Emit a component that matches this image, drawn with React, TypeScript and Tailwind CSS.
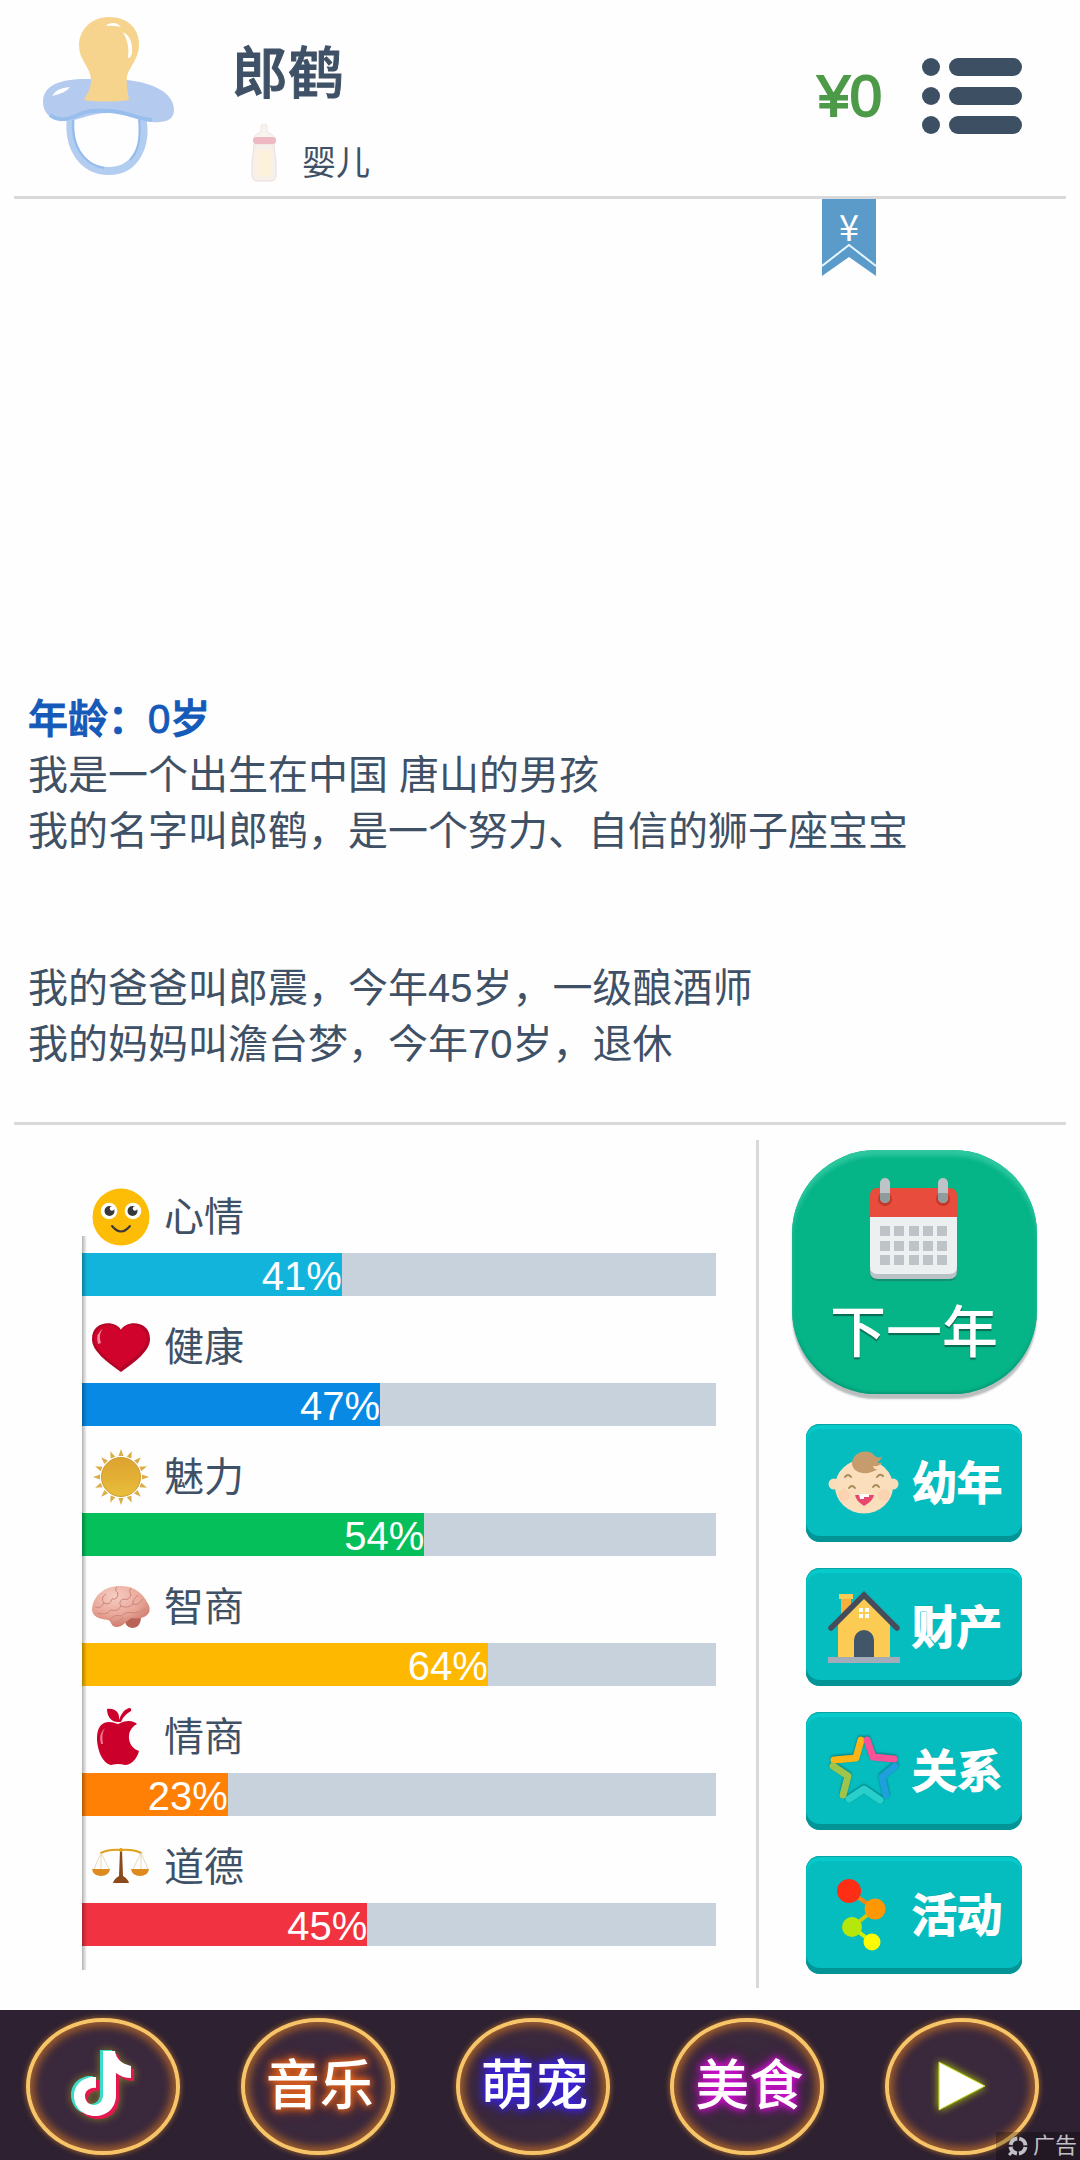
import type { ReactNode } from 'react';

interface Stat {
  label: string;
  value: number;
  color: string;
  icon: ReactNode;
}

interface MenuItem {
  label: string;
  icon: ReactNode;
}

interface AdItem {
  label: string;
  glow?: string;
  icon?: ReactNode;
}

const PacifierIcon = () => (
  <svg viewBox="42 16 132 160" className="h-[160px] w-[132px] shrink-0">
    <path d="M71 116C67 148 83 171 109 171C135 171 148 146 142 116" fill="none" stroke="#b3cdf1" strokeWidth="8" />
    <path d="M73 118C71 144 82 164 104 168M139 118C141 140 138 152 130 160" fill="none" stroke="#93bbec" strokeWidth="2" />
    <path
      d="M43 102C43 84 62 78 92 79L128 80C152 83 174 92 174 110C174 120 165 123 152 122C138 120 128 112 108 113C90 113 76 122 64 121C52 120 43 114 43 102Z"
      fill="#b4cbef"
    />
    <path d="M50 115C58 121 66 120 78 115C90 109 98 111 108 111C126 111 136 119 152 120" fill="none" stroke="#98beee" strokeWidth="4" />
    <path
      d="M109 17C92 17 79 29 79 46C79 60 91 68 91 80C91 90 86 95 84 100C96 102 116 102 129 100C128 94 126 84 127 77C129 66 139 60 139 44C139 28 127 17 109 17Z"
      fill="#f7d48e"
    />
    <path d="M106 26Q108 23 113 23Q118 23 121 27Q113 25 106 26ZM123 32Q133 37 132 53Q131 58 128 58Q130 44 123 32Z" fill="#fff" />
    <path d="M52 96Q56 88 70 87Q66 93 52 96Z" fill="#fff" />
  </svg>
);

const BottleIcon = () => (
  <svg viewBox="0 0 28 58" className="h-[58px] w-[28px]">
    <path d="M11 3Q11 0 14 0Q17 0 17 3L17 8Q24 11 24 14H4Q4 11 11 8Z" fill="#f7f3ef" stroke="#eee5e1" />
    <path d="M4 20H24C24 28 26 32 26 40C26 50 27 57 21 57H7C1 57 2 50 2 40C2 32 4 28 4 20Z" fill="#f7f0ea" stroke="#e9ded9" />
    <path d="M7 26H21C20 32 22 38 21 51Q14 54 7 51C6 38 8 32 7 26Z" fill="#fcf2dc" />
    <rect x="3" y="13" width="23" height="7" rx="3" fill="#efb9c3" />
  </svg>
);

const ListIcon = () => (
  <svg viewBox="0 0 100 76" className="h-[76px] w-[100px]" fill="#3d4f63">
    {[0, 29, 58].map((y) => (
      <g key={y}>
        <circle cx="9" cy={y + 9} r="9" />
        <rect x="27" y={y} width="73" height="18" rx="9" />
      </g>
    ))}
  </svg>
);

const SmileIcon = () => (
  <svg viewBox="0 0 58 58" className="size-[58px]">
    <circle cx="29" cy="29" r="28.5" fill="#fdbc06" />
    <circle cx="17" cy="23" r="8.3" fill="#fff" />
    <circle cx="41" cy="23" r="8.3" fill="#fff" />
    <circle cx="17.5" cy="23" r="5" fill="#38383a" />
    <circle cx="40.5" cy="23" r="5" fill="#38383a" />
    <circle cx="20" cy="20.5" r="2.2" fill="#fff" />
    <circle cx="43" cy="20.5" r="2.2" fill="#fff" />
    <path d="M20 38Q29 49 38 38" fill="none" stroke="#38383a" strokeWidth="2" strokeLinecap="round" />
  </svg>
);

const HeartIcon = () => (
  <svg viewBox="0 0 58 58" className="size-[58px]">
    <path d="M29 12C24 2 0 2 0 21C0 33 14 43 29 54C44 43 58 33 58 21C58 2 34 2 29 12Z" fill="#b30526" />
    <path d="M28 13C23 4 2 5 2 21C3 32 14 40 28 50C42 40 55 31 55 21C55 5 33 3 28 13Z" fill="#d0032c" />
    <path d="M11 11Q3 15 6 26L9 25Q6 16 11 11Z" fill="#f08a9c" />
  </svg>
);

const SunIcon = () => (
  <svg viewBox="0 0 58 58" className="size-[58px]">
    <defs>
      <linearGradient id="sun" x1="0" y1="0" x2="0" y2="1">
        <stop offset="0" stopColor="#dda22f" />
        <stop offset="1" stopColor="#e8be3a" />
      </linearGradient>
    </defs>
    {Array.from({ length: 16 }, (_, i) => (
      <path key={i} d="M29 1L31.5 8H26.5Z" fill="#dcac45" transform={`rotate(${i * 22.5} 29 29)`} />
    ))}
    <circle cx="29" cy="29" r="19.5" fill="url(#sun)" stroke="#cf9c35" />
  </svg>
);

const BrainIcon = () => (
  <svg viewBox="0 0 58 58" className="size-[58px]">
    <defs>
      <radialGradient id="brain" cx="0.4" cy="0.25" r="0.8">
        <stop offset="0" stopColor="#f6cdc2" />
        <stop offset="0.6" stopColor="#e8a597" />
        <stop offset="1" stopColor="#c97465" />
      </radialGradient>
    </defs>
    <path d="M33 40Q32 49 40 50Q49 50 49 38Z" fill="#b96357" />
    <path
      d="M0 31C1 18 12 8 28 8C42 7 52 17 55 24C58 28 59 34 55 37C52 40 46 41 40 40C34 42 32 49 24 49C18 48 20 43 16 42C8 41 0 39 0 31Z"
      fill="url(#brain)"
    />
    <g fill="none" stroke="#cb8678" strokeWidth="1">
      <path d="M3 29Q9 31 12 25Q8 20 14 16M12 25Q18 28 20 21Q26 22 26 15Q22 12 25 9" />
      <path d="M5 35Q14 38 19 32Q26 34 29 28Q26 24 31 21Q37 23 39 17Q36 13 39 10" />
      <path d="M18 42Q22 36 29 38Q35 33 41 35Q48 35 53 31M29 28Q36 31 41 26Q47 28 51 21M41 26Q40 22 46 17M21 47Q28 44 31 39" />
    </g>
  </svg>
);

const AppleIcon = () => (
  <svg viewBox="0 0 58 58" className="size-[58px]" fill="#cb002b">
    <path d="M26 16C35 11 42 13 45 16C33 22 35 39 47 43C45 51 39 57 33 57Q30 56 26 56Q23 56 19 57C10 55 5 41 5 30C5 15 14 11 26 16Z" />
    <path d="M26 14C19 14 15 8 15 1C23 0 28 4 27 12C29 7 31 2 37 0Q40 0 39 3C34 6 31 9 29 14Z" />
    <path d="M13 20Q6 26 9 36L11 36Q9 26 13 20Z" fill="#ee7f93" />
  </svg>
);

const ScalesIcon = () => (
  <svg viewBox="0 0 58 58" className="size-[58px]">
    <path d="M9 15Q17 11 29 12Q41 11 49 15" fill="none" stroke="#e0a01c" strokeWidth="2" strokeLinecap="round" />
    <path d="M9 15L2 31M9 15V31M9 15L17 31M49 15L41 31M49 15V31M49 15L56 31" fill="none" stroke="#e2cfae" strokeWidth="0.8" />
    <path d="M0 31H18Q17 38 9 38Q1 38 0 31ZM39 31H57Q56 38 48 38Q40 38 39 31Z" fill="#dd8b1e" />
    <path d="M28 12H30L31 38Q36 41 37 45H21Q22 41 27 38Z" fill="#8a4a1b" />
    <circle cx="29" cy="12" r="2" fill="#e0a01c" />
  </svg>
);

const CalendarIcon = () => (
  <svg viewBox="0 0 88 103" className="h-[103px] w-[88px]">
    <path d="M0 40H87V95Q87 103 79 103H8Q0 103 0 95Z" fill="#1c7a5e" opacity="0.6" />
    <path d="M0 40H87V93Q87 101 79 101H8Q0 101 0 93Z" fill="#b9c3c7" />
    <path d="M0 38H87V88Q87 96 79 96H8Q0 96 0 88Z" fill="#ecf0f1" />
    <path d="M0 39V18Q0 10 8 10H79Q87 10 87 18V39Z" fill="#e74c3c" />
    {[10, 68].map((x) => (
      <g key={x}>
        <circle cx={x + 5} cy="21" r="7" fill="#c0392b" />
        <rect x={x} y="0" width="10" height="25" rx="5" fill="#bdc3c7" />
        <path d={`M${x} 15h10v5a5 5 0 0 1-10 0Z`} fill="#8f9b9c" />
      </g>
    ))}
    {[48, 63, 77].map((y) =>
      [10, 24, 39, 53, 67].map((x) => <rect key={`${x}-${y}`} x={x} y={y} width="10" height="10" fill="#bdc3c7" />)
    )}
  </svg>
);

const BabyIcon = () => (
  <svg viewBox="0 0 72 72" className="size-[72px]">
    <circle cx="6" cy="37" r="5.5" fill="#fbdcb8" />
    <circle cx="65" cy="37" r="5.5" fill="#fbdcb8" />
    <ellipse cx="36" cy="39.5" rx="29" ry="27" fill="#fbdfbd" />
    <circle cx="16" cy="48" r="6" fill="#fbd3b1" />
    <circle cx="56" cy="48" r="6" fill="#fbd3b1" />
    <path d="M24 17C24 4 41 1 47 9Q51 12 54 9Q53 14 49 15Q53 17 55 15Q51 20 45 19Q46 23 50 22C40 29 25 27 24 17Z" fill="#c69c6d" />
    <g fill="none" stroke="#a98a5d" strokeWidth="2" strokeLinecap="round">
      <path d="M17 30Q20 26 23 30M49 30Q52 26 55 29M21 41Q24 37 27 41M45 40Q48 36 51 40" />
    </g>
    <path d="M27 48H46Q45 54 36 59Q28 54 27 48Z" fill="#e8486d" />
    <path d="M31 47H41V50H36V52H32Z" fill="#fff" />
  </svg>
);

const HouseIcon = () => (
  <svg viewBox="0 0 72 72" className="size-[72px]">
    <path d="M13 7H23V22L13 28Z" fill="#f6ae3c" />
    <rect x="11" y="3" width="14" height="5" fill="#fccb54" />
    <path d="M10 66V30L36 5L62 30V66Z" fill="#fccb54" />
    <path d="M3 37L36 4L69 37" fill="none" stroke="#474c5b" strokeWidth="5.5" strokeLinecap="round" />
    <path d="M26 66V49A10 10 0 0 1 46 49V66Z" fill="#42566a" />
    <path d="M31 17H35V21H31ZM37 17H41V21H37ZM31 23H35V27H31ZM37 23H41V27H37Z" fill="#fff" />
    <rect y="66" width="72" height="6" fill="#a4abb9" />
  </svg>
);

const StarIcon = () => (
  <svg
    viewBox="0 0 72 72"
    className="size-[72px] drop-shadow-[0_-1px_1px_#04777a]"
    fill="none"
    strokeWidth="7"
    strokeLinejoin="round"
    strokeLinecap="round"
  >
    <path d="M33 5L28 23L6 25" stroke="#fdb515" />
    <path d="M39 5L45 22L66 24" stroke="#f75397" />
    <path d="M67 31L54 42L58 60" stroke="#1da0dc" />
    <path d="M21 64L36 54L52 65" stroke="#29cfcb" />
    <path d="M5 31L20 41L15 60" stroke="#9dc44b" />
  </svg>
);

const NodesIcon = () => (
  <svg viewBox="0 0 72 72" className="size-[72px]">
    <path d="M21 12L47 30" stroke="#f0851a" strokeWidth="4" />
    <path d="M47 30L24 48" stroke="#d3c80c" strokeWidth="4" />
    <path d="M24 48L44 63" stroke="#d3ee06" strokeWidth="4" />
    <circle cx="21" cy="12" r="12" fill="#fd2e14" />
    <circle cx="47" cy="30" r="10.5" fill="#ff9705" />
    <circle cx="24" cy="48" r="10" fill="#b5e80a" />
    <circle cx="44" cy="63" r="8.5" fill="#fcfb05" />
  </svg>
);

const notePath =
  'M36 2H48C49 10 55 15 64 17V29C58 29 53 27 49 24V46C49 59 40 67 28 67S7 58 7 47C7 35 17 27 29 28V39C23 38 18 42 18 47C18 52 22 56 27 56S36 52 36 46Z';

const NoteIcon = () => (
  <svg viewBox="0 0 72 74" className="h-[74px] w-[72px] drop-shadow-[0_0_4px_#8a7a2a]">
    <path d={notePath} fill="#39dcc8" transform="translate(-3 -1)" />
    <path d={notePath} fill="#e5174f" transform="translate(3 3)" />
    <path d={notePath} fill="#fff" />
  </svg>
);

const PlayIcon = () => (
  <svg viewBox="0 0 48 50" className="h-[50px] w-[48px] drop-shadow-[0_0_4px_#b7d400]">
    <path d="M1 1L47 25L1 49Z" fill="#fff" stroke="#c4d92a" strokeWidth="1" />
  </svg>
);

const stats: Stat[] = [
  { label: '心情', value: 41, color: 'bg-[#13b4dc]', icon: <SmileIcon /> },
  { label: '健康', value: 47, color: 'bg-[#088ae4]', icon: <HeartIcon /> },
  { label: '魅力', value: 54, color: 'bg-[#05bf5b]', icon: <SunIcon /> },
  { label: '智商', value: 64, color: 'bg-[#ffb800]', icon: <BrainIcon /> },
  { label: '情商', value: 23, color: 'bg-[#ff8005]', icon: <AppleIcon /> },
  { label: '道德', value: 45, color: 'bg-[#f13341]', icon: <ScalesIcon /> },
];

const menu: MenuItem[] = [
  { label: '幼年', icon: <BabyIcon /> },
  { label: '财产', icon: <HouseIcon /> },
  { label: '关系', icon: <StarIcon /> },
  { label: '活动', icon: <NodesIcon /> },
];

const ads: AdItem[] = [
  { label: '抖音', icon: <NoteIcon /> },
  { label: '音乐', glow: '[text-shadow:0_0_6px_#e8641c,0_0_10px_#e8641c,0_0_14px_#c2501a]' },
  { label: '萌宠', glow: '[text-shadow:0_0_6px_#3a22e0,0_0_10px_#3a22e0,0_0_14px_#3a22e0]' },
  { label: '美食', glow: '[text-shadow:0_0_6px_#d010d0,0_0_10px_#d010d0,0_0_14px_#a010a0]' },
  { label: '播放', icon: <PlayIcon /> },
];

function Header() {
  return (
    <header className="flex items-center pt-[10px] pr-[58px] pb-[14px] pl-[42px]">
      <PacifierIcon />
      <div className="ml-[58px] flex flex-1 flex-col gap-[18px] pt-8">
        <h1 className="text-[56px] leading-[64px] font-medium [-webkit-text-stroke:1px]">郎鹤</h1>
        <div className="flex items-end gap-6 pl-[18px]">
          <BottleIcon />
          <span className="text-[34px] leading-[38px]">婴儿</span>
        </div>
      </div>
      <span className="mr-10 text-[58px] leading-[64px] text-[#4d9a49] [-webkit-text-stroke:2px]">¥0</span>
      <button type="button" aria-label="菜单">
        <ListIcon />
      </button>
    </header>
  );
}

function LifeLog() {
  return (
    <main className="relative flex flex-1 flex-col justify-end px-7 pb-[50px] text-[40px] leading-[56px]">
      <button type="button" className="absolute top-0 right-[204px] h-[77px] w-[54px] text-white">
        <svg viewBox="0 0 54 77" className="absolute inset-0 size-full">
          <path d="M0 0H54V77L27 58L0 77Z" fill="#5b9bca" />
          <path d="M0 67L27 46L54 67" fill="none" stroke="#e6f7ff" strokeWidth="2" />
        </svg>
        <span className="absolute inset-x-0 top-0 text-center font-['Noto_Sans_CJK_SC',sans-serif] text-[36px] leading-[52px]">
          ¥
        </span>
      </button>
      <h2 className="font-medium text-[#155ab8] [-webkit-text-stroke:1px]">年龄：0岁</h2>
      <p>我是一个出生在中国 唐山的男孩</p>
      <p>我的名字叫郎鹤，是一个努力、自信的狮子座宝宝</p>
      <p className="mt-[101px]">我的爸爸叫郎震，今年45岁，一级酿酒师</p>
      <p>我的妈妈叫澹台梦，今年70岁，退休</p>
    </main>
  );
}

function StatRow({ label, value, color, icon }: Stat) {
  return (
    <div className="pt-[22px]">
      <div className="mb-[7px] flex items-center gap-[14px] pl-[10px]">
        {icon}
        <span className="text-[40px] leading-[58px]">{label}</span>
      </div>
      <div role="meter" aria-label={label} aria-valuenow={value} aria-valuemin={0} aria-valuemax={100} className="bg-[#c8d2dc]">
        <div
          className={`${color} pt-[3px] text-right text-[40px] leading-[40px] text-white`}
          style={{ width: `${value}%` }}
        >
          {value}%
        </div>
      </div>
    </div>
  );
}

function ActionPanel() {
  return (
    <nav className="flex w-[321px] flex-col items-center gap-[26px] pt-[25px] pr-[21px] pb-9 pl-[10px] text-white">
      <button
        type="button"
        className="mb-1 flex h-[244px] w-[245px] flex-col items-center gap-6 rounded-[84px] bg-[#05b487] pt-7 shadow-[inset_0_6px_4px_#2ec79f,inset_0_-2px_3px_#049a78,0_5px_2px_#b9bdbd]"
      >
        <CalendarIcon />
        <span className="text-[56px] leading-[56px] font-medium [text-shadow:0_2px_1px_#0b6a52]">下一年</span>
      </button>
      {menu.map((item) => (
        <button
          key={item.label}
          type="button"
          className="flex h-[118px] w-[216px] items-center gap-3 rounded-[14px] bg-[#05bdbf] pl-[22px] shadow-[inset_0_1px_1px_#0d9fa2,inset_0_5px_1px_#06cccb,inset_0_-6px_0_#059496]"
        >
          {item.icon}
          <span className="pt-1 text-[45px] leading-[56px] font-medium [-webkit-text-stroke:2px] [text-shadow:0_-1px_1px_#047577]">
            {item.label}
          </span>
        </button>
      ))}
    </nav>
  );
}

function AdBanner() {
  return (
    <footer className="relative flex h-[150px] items-center justify-between bg-[#2e2131] pt-[2px] pr-[41px] pl-[26px]">
      {ads.map((ad) => (
        <a
          key={ad.label}
          href="#"
          aria-label={ad.label}
          className="flex h-[137px] w-[154px] items-center justify-center rounded-[50%] border-[4px] border-[#f8c468] bg-[#3a283c] shadow-[inset_0_0_8px_4px_#a5602a,0_0_5px_1px_#8a5a30]"
        >
          {ad.icon ?? (
            <span className={`pl-1 text-[54px] leading-[60px] font-medium whitespace-nowrap text-white ${ad.glow}`}>
              {ad.label}
            </span>
          )}
        </a>
      ))}
      <div className="absolute right-0 bottom-0 flex items-center gap-[5px] bg-black/25 pr-[3px] pl-3 text-[22px] leading-[28px] text-[#c3bfc6]">
        <svg viewBox="0 0 20 20" className="size-5" fill="none" stroke="currentColor">
          <circle cx="10" cy="10" r="7.5" strokeWidth="4" strokeDasharray="9.8 2" strokeDashoffset="-1" />
          <path d="M1 19L5 15" strokeWidth="3" />
        </svg>
        广告
      </div>
    </footer>
  );
}

export default function App() {
  return (
    <div className="flex min-h-screen flex-col bg-[#fefefe] font-['Liberation_Sans','Noto_Sans_CJK_SC',sans-serif] text-[#3f5166]">
      <Header />
      <hr className="mx-[14px] border-t-[3px] border-[#d9d9dc]" />
      <LifeLog />
      <hr className="mx-[14px] border-t-[3px] border-[#d9d9dc]" />
      <div className="flex">
        <section className="flex-1 pt-[41px] pr-10 pb-16 pl-[82px]">
          <div className="relative">
            {stats.map((stat) => (
              <StatRow key={stat.label} {...stat} />
            ))}
            {/* left axis shadow, lies over the bars */}
            <div className="absolute top-[70px] -bottom-6 left-0 w-[5px] bg-linear-to-r from-black/30 to-transparent" />
          </div>
        </section>
        <div className="mt-[15px] mb-[22px] w-[3px] bg-[#d9d9dc]" />
        <ActionPanel />
      </div>
      <AdBanner />
    </div>
  );
}
